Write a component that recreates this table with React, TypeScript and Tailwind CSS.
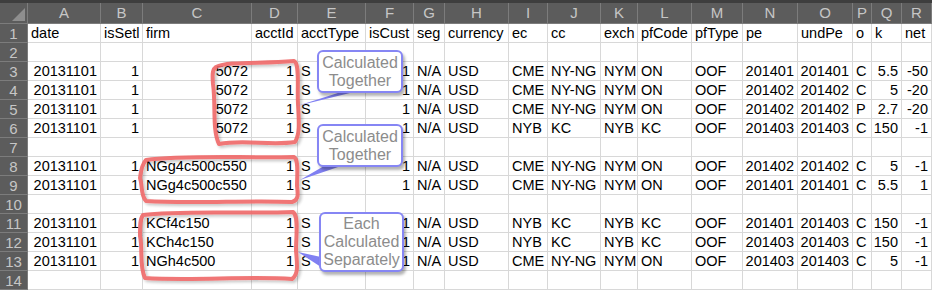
import React from 'react';

const cols = ['A', 'B', 'C', 'D', 'E', 'F', 'G', 'H', 'I', 'J', 'K', 'L', 'M', 'N', 'O', 'P', 'Q', 'R'];

// full class names so tailwind picks them up
const widths = [
  'w-[73px]', 'w-[42px]', 'w-[109px]', 'w-[46px]', 'w-[68px]', 'w-[48px]', 'w-[31px]', 'w-[64px]', 'w-[39px]',
  'w-[53px]', 'w-[37px]', 'w-[54px]', 'w-[51px]', 'w-[55px]', 'w-[55px]', 'w-[19px]', 'w-[30px]', 'w-[30px]',
];

const rows: string[][] = [
  ['date', 'isSetl', 'firm', 'acctId', 'acctType', 'isCust', 'seg', 'currency', 'ec', 'cc', 'exch', 'pfCode', 'pfType', 'pe', 'undPe', 'o', 'k', 'net'],
  [],
  ['20131101', '1', '5072', '1', 'S', '1', 'N/A', 'USD', 'CME', 'NY-NG', 'NYM', 'ON', 'OOF', '201401', '201401', 'C', '5.5', '-50'],
  ['20131101', '1', '5072', '1', 'S', '1', 'N/A', 'USD', 'CME', 'NY-NG', 'NYM', 'ON', 'OOF', '201402', '201402', 'C', '5', '-20'],
  ['20131101', '1', '5072', '1', 'S', '1', 'N/A', 'USD', 'CME', 'NY-NG', 'NYM', 'ON', 'OOF', '201402', '201402', 'P', '2.7', '-20'],
  ['20131101', '1', '5072', '1', 'S', '1', 'N/A', 'USD', 'NYB', 'KC', 'NYB', 'KC', 'OOF', '201403', '201403', 'C', '150', '-1'],
  [],
  ['20131101', '1', 'NGg4c500c550', '1', 'S', '1', 'N/A', 'USD', 'CME', 'NY-NG', 'NYM', 'ON', 'OOF', '201402', '201402', 'C', '5', '-1'],
  ['20131101', '1', 'NGg4c500c550', '1', 'S', '1', 'N/A', 'USD', 'CME', 'NY-NG', 'NYM', 'ON', 'OOF', '201401', '201401', 'C', '5.5', '1'],
  [],
  ['20131101', '1', 'KCf4c150', '1', 'S', '1', 'N/A', 'USD', 'NYB', 'KC', 'NYB', 'KC', 'OOF', '201401', '201403', 'C', '150', '-1'],
  ['20131101', '1', 'KCh4c150', '1', 'S', '1', 'N/A', 'USD', 'NYB', 'KC', 'NYB', 'KC', 'OOF', '201403', '201403', 'C', '150', '-1'],
  ['20131101', '1', 'NGh4c500', '1', 'S', '1', 'N/A', 'USD', 'CME', 'NY-NG', 'NYM', 'ON', 'OOF', '201403', '201403', 'C', '5', '-1'],
  [],
];

const isNum = (v: string) => /^-?[\d.]+$/.test(v);

const Callout: React.FC<{ className: string; lines: string[] }> = ({ className, lines }) => (
  <div
    className={`absolute flex flex-col items-center justify-center bg-white border-2 border-[#8686f4] rounded-[6px] shadow-[2px_3px_3px_rgba(0,0,0,0.3)] text-[#8c8c8c] text-[16px] leading-[18px] ${className}`}
  >
    {lines.map((l) => (
      <span key={l}>{l}</span>
    ))}
  </div>
);

export default function App() {
  return (
    <div className="relative w-[932px] h-[291px] overflow-hidden bg-white font-['Liberation_Sans',Arial,sans-serif] text-[14.5px] text-black">
      <div className="h-[3px] bg-[#3e3e3e]" />
      {/* column headers */}
      <div className="flex h-[21px] bg-[#5c5c5c] text-[#c6c6c6] text-[15px] leading-[20px] border-b border-[#7c7c7c]">
        <div className="relative w-[28px] shrink-0 border-r border-[#7c7c7c]">
          <div className="absolute right-[2px] bottom-[2px] w-0 h-0 border-l-[13px] border-l-transparent border-b-[13px] border-b-[#8e8e8e]" />
        </div>
        {cols.map((c, i) => (
          <div key={c} className={`${widths[i]} shrink-0 text-center border-r border-[#7c7c7c]`}>
            {c}
          </div>
        ))}
      </div>

      {rows.map((row, r) => (
        <div key={r} className="flex h-[19px] leading-[19px]">
          <div className="w-[28px] shrink-0 bg-[#5c5c5c] text-[#c6c6c6] text-[15px] text-center border-r border-b border-[#7c7c7c]">
            {r + 1}
          </div>
          {cols.map((c, i) => {
            const v = row[i] ?? '';
            return (
              <div
                key={c}
                className={`${widths[i]} shrink-0 whitespace-nowrap overflow-visible border-r border-b border-[#d8d8d8] ${
                  isNum(v) ? 'text-right pr-[3px]' : 'text-left pl-[3px]'
                }`}
              >
                {v}
              </div>
            );
          })}
        </div>
      ))}

      {/* annotation overlay */}
      <svg className="absolute left-0 top-0 pointer-events-none" width="932" height="291" viewBox="0 0 932 291">
        <defs>
          <filter id="soft" x="-10%" y="-10%" width="130%" height="130%">
            <feDropShadow dx="2" dy="2" stdDeviation="1.5" floodColor="#000" floodOpacity="0.25" />
          </filter>
        </defs>
        <g fill="none" stroke="#ef6767" strokeWidth="4" strokeLinecap="round" strokeLinejoin="round" opacity="0.9" filter="url(#soft)">
          <path d="M216 67 C228 61 262 64 294 61 C300 64 297 86 298 104 C299 122 300 134 295 142 C270 146 244 139 219 144 C212 130 216 104 213 84 C212 72 213 69 216 67 Z" />
          <path d="M146 160 C180 155 240 158 294 157 C299 160 297 175 297 186 C298 194 299 200 292 202 C250 200 190 204 146 201 C140 194 143 186 140 178 C141 170 142 164 146 160 Z" />
          <path d="M143 215 C180 210 250 214 293 212 C299 216 296 236 296 250 C297 264 299 274 292 279 C250 276 190 281 145 278 C139 266 143 250 140 236 C140 226 140 219 143 215 Z" />
        </g>
        <g fill="#8080f2">
          <polygon points="297,106 341,92 354,92" />
          <polygon points="300,180 324,166 341,166" />
          <polygon points="298,252 321,257 321,267" />
        </g>
      </svg>

      <Callout className="left-[317px] top-[50px] w-[86px] h-[43px]" lines={['Calculated', 'Together']} />
      <Callout className="left-[317px] top-[124px] w-[86px] h-[43px]" lines={['Calculated', 'Together']} />
      <Callout className="left-[319px] top-[212px] w-[85px] h-[60px]" lines={['Each', 'Calculated', 'Separately']} />
    </div>
  );
}
